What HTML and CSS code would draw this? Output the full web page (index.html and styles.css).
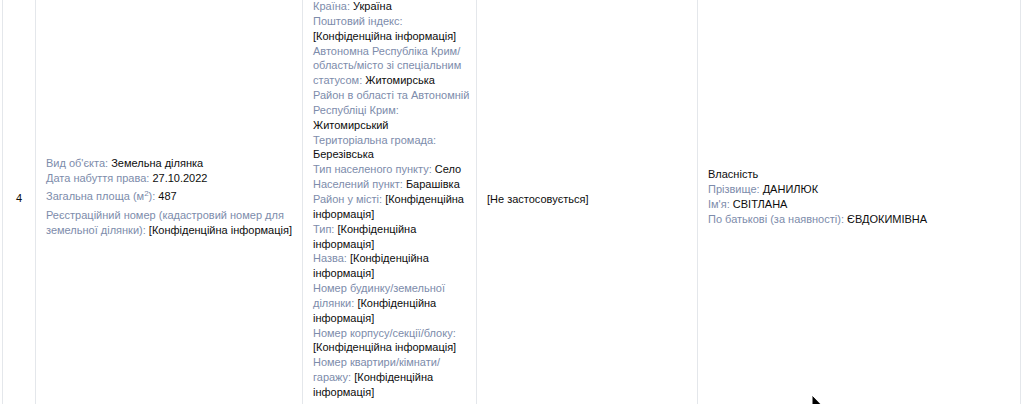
FILE: index.html
```html
<!DOCTYPE html>
<html lang="uk">
<head>
<meta charset="utf-8">
<title>Реєстр</title>
<link rel="stylesheet" href="styles.css">
</head>
<body>
<div class="viewport">
  <table class="rights">
    <colgroup>
      <col class="c-num"><col class="c-obj"><col class="c-addr"><col class="c-extra"><col class="c-owner">
    </colgroup>
    <tbody>
      <tr>
        <td class="num">4</td>
        <td class="obj">
          <div><span class="lbl">Вид об'єкта:</span> Земельна ділянка</div>
          <div><span class="lbl">Дата набуття права:</span> 27.10.2022</div>
          <div class="sq"><span class="lbl">Загальна площа (м<sup>2</sup>):</span> 487</div>
          <div class="gap"><span class="lbl">Реєстраційний номер (кадастровий номер для земельної ділянки):</span> [Конфіденційна інформація]</div>
        </td>
        <td class="addr">
          <div><span class="lbl">Країна:</span> Україна</div>
          <div><span class="lbl">Поштовий індекс:</span> [Конфіденційна інформація]</div>
          <div><span class="lbl">Автономна Республіка Крим/ область/місто зі спеціальним статусом:</span> Житомирська</div>
          <div><span class="lbl">Район в області та Автономній Республіці Крим:</span> Житомирський</div>
          <div><span class="lbl">Територіальна громада:</span> Березівська</div>
          <div><span class="lbl">Тип населеного пункту:</span> Село</div>
          <div><span class="lbl">Населений пункт:</span> Барашівка</div>
          <div><span class="lbl">Район у місті:</span> [Конфіденційна інформація]</div>
          <div><span class="lbl">Тип:</span> [Конфіденційна інформація]</div>
          <div><span class="lbl">Назва:</span> [Конфіденційна інформація]</div>
          <div><span class="lbl">Номер будинку/земельної ділянки:</span> [Конфіденційна інформація]</div>
          <div><span class="lbl">Номер корпусу/секції/блоку:</span> [Конфіденційна інформація]</div>
          <div><span class="lbl">Номер квартири/кімнати/ гаражу:</span> [Конфіденційна інформація]</div>
        </td>
        <td>[Не застосовується]</td>
        <td class="owner">
          <div>Власність</div>
          <div><span class="lbl">Прізвище:</span> ДАНИЛЮК</div>
          <div><span class="lbl">Ім'я:</span> СВІТЛАНА</div>
          <div><span class="lbl">По батькові (за наявності):</span> ЄВДОКИМІВНА</div>
        </td>
      </tr>
    </tbody>
  </table>
  <svg class="cursor" width="14" height="20" viewBox="0 0 14 20" aria-hidden="true">
    <path d="M1 1 L1 16 L4.5 12.5 L7 18 L9.2 17 L6.8 11.8 L11.5 11.8 Z" fill="#000" stroke="#fff" stroke-width="1"/>
  </svg>
</div>
</body>
</html>
```

FILE: styles.css
```css
html, body {
  margin: 0;
  padding: 0;
  background: #fff;
}

.viewport {
  position: relative;
  height: 404px;
  overflow: hidden;
}

.rights {
  margin: -11px 0 0 2px;
  width: 1019px;
  table-layout: fixed;
  border-collapse: collapse;
  font-family: "Liberation Sans", Arial, sans-serif;
  font-size: 11px;
  line-height: 1.35;
  color: #0d0d0d;
}

.c-num { width: 33px; }
.c-obj { width: 267px; }
.c-addr { width: 174px; }
.c-extra { width: 221px; }
.c-owner { width: auto; }

.rights td {
  border: 1px solid #e4e7eb;
  padding: 9px 8px 9px 10px;
  vertical-align: middle;
}

.rights td.addr {
  padding-right: 3px;
}

.rights td.num {
  text-align: center;
  padding: 0 0 2px;
}

.rights td.obj {
  padding-bottom: 14px;
}

.rights td.owner {
  padding-bottom: 14px;
}

.lbl {
  color: #7d8cab;
}

.sq {
  padding-top: 3px;
}

sup {
  font-size: 8px;
  vertical-align: 4px;
  line-height: 0;
}

.gap {
  margin-top: 4px;
}

.cursor {
  position: absolute;
  left: 811px;
  top: 394px;
}
```
